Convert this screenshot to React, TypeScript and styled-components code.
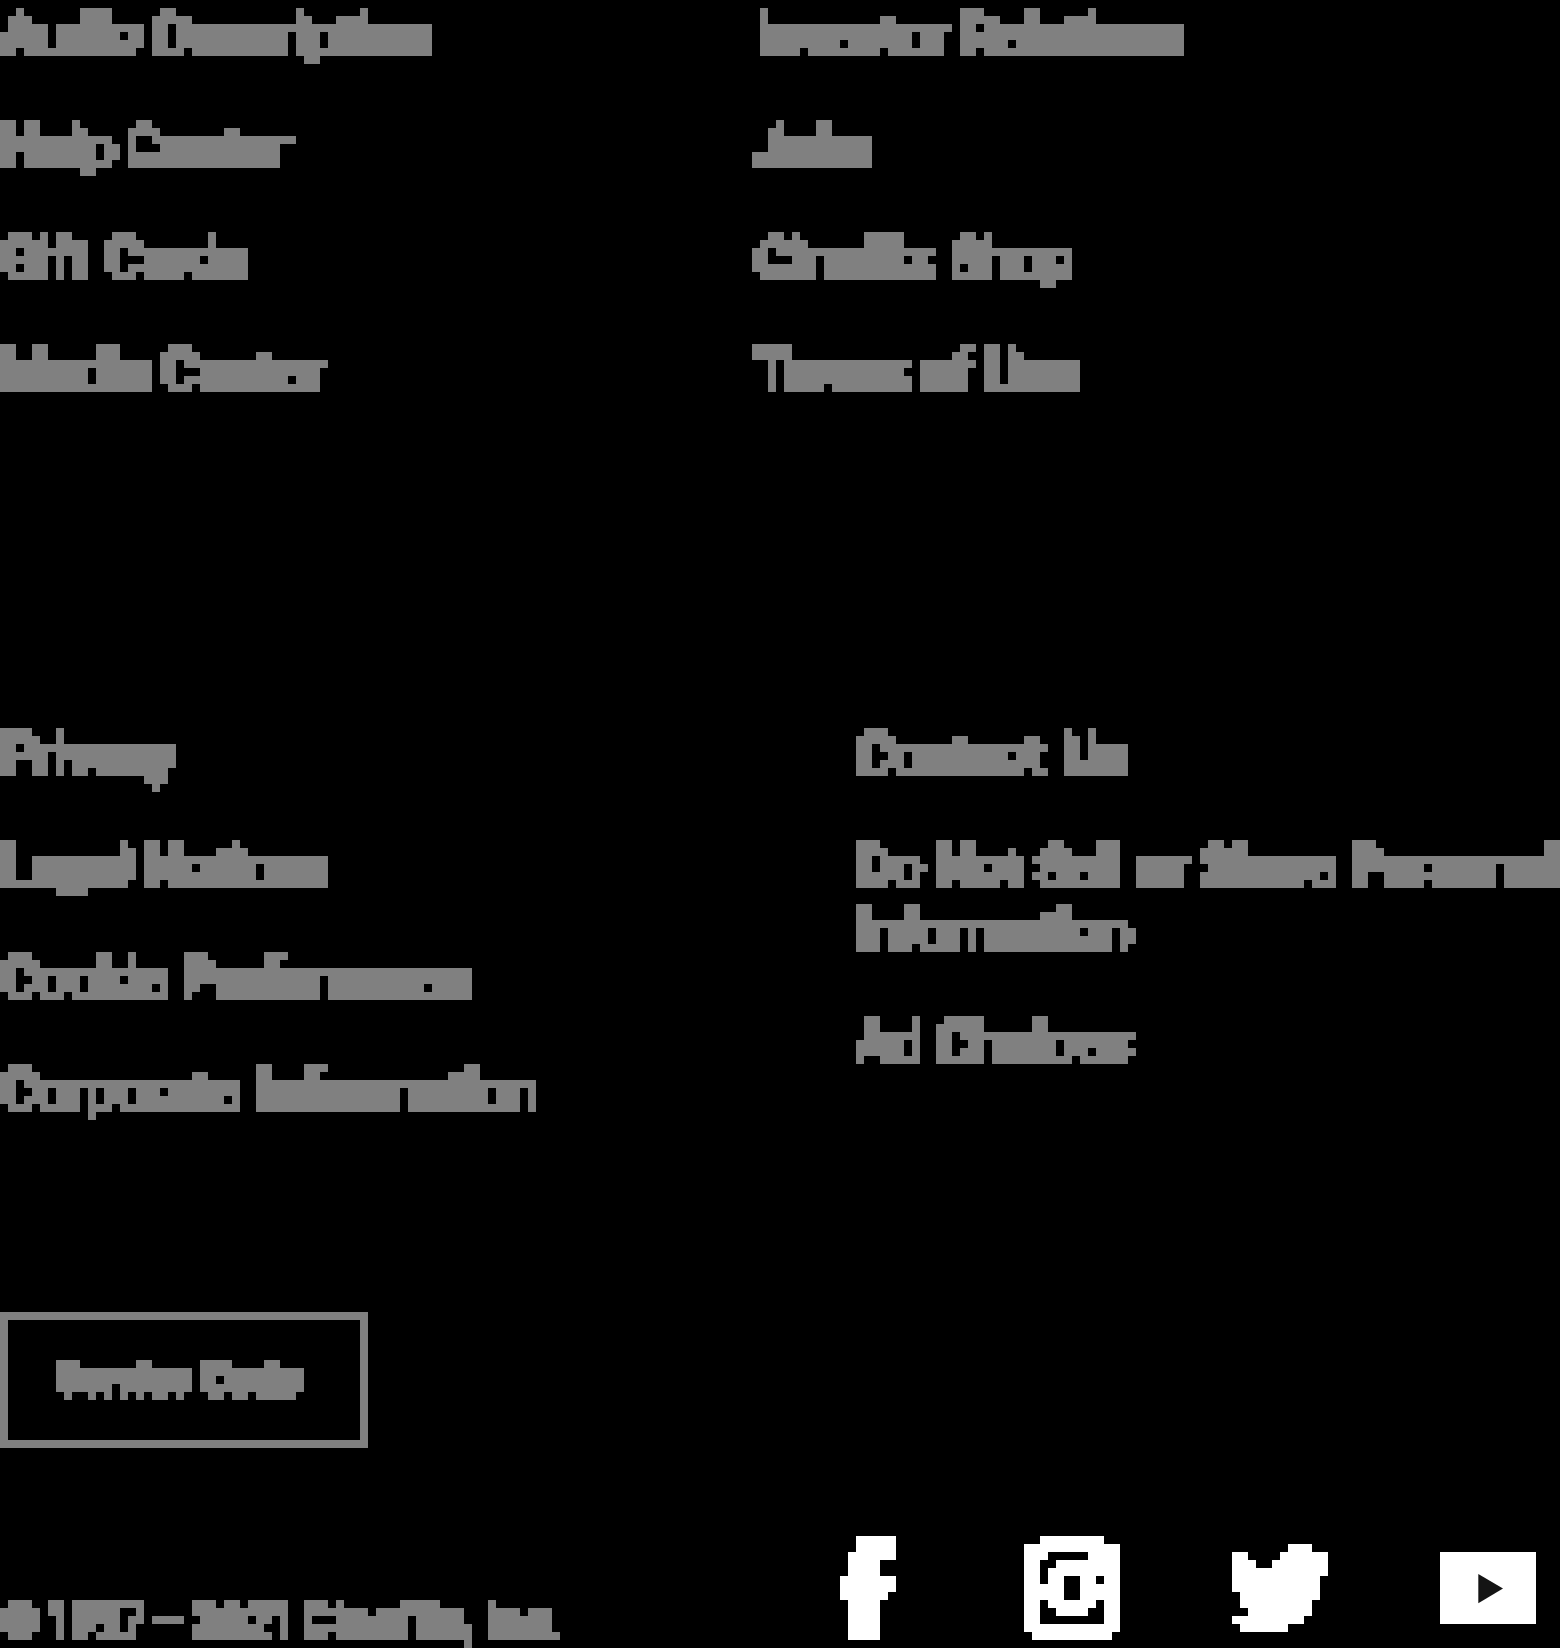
import React from "react";
import styled, { createGlobalStyle } from "styled-components";

const CELL = 8;
const KERNEL = Array(CELL * CELL).fill(1).join(" ");

const GlobalStyle = createGlobalStyle`
  body {
    margin: 0;
    background: #000;
  }
`;

const Page = styled.footer`
  display: flex;
  flex-direction: column;
  width: 1560px;
  height: 1648px;
  overflow: hidden;
  background: #000;
  color: #808080;
  font-family: Roboto, "Liberation Sans", Arial, sans-serif;
  text-rendering: geometricPrecision;
`;

const FilterDefs = styled.svg`
  position: absolute;
  width: 0;
  height: 0;
`;

const LinkGrid = styled.nav<{ $second: number; $height: number }>`
  display: grid;
  grid-template-columns: ${(p) => p.$second}px 1fr;
  height: ${(p) => p.$height}px;
  filter: url(#cells);
`;

const LinkList = styled.ul`
  display: flex;
  flex-direction: column;
  gap: 48px;
  margin: 0;
  padding: 4px 0 0;
  list-style: none;
`;

const LinkItem = styled.li<{ $track?: number; $space?: number }>`
  font-size: 54px;
  line-height: 64px;
  letter-spacing: ${(p) => p.$track ?? 0}px;
  word-spacing: ${(p) => p.$space ?? 0}px;
  text-shadow: 2.5px 0 #808080;
  white-space: nowrap;
`;

const ServiceRow = styled.div`
  display: flex;
  height: 136px;
  filter: url(#cells);
`;

const ServiceButton = styled.button`
  box-sizing: border-box;
  width: 368px;
  height: 136px;
  padding: 0 0 2px 46px;
  border: 8px solid #808080;
  border-radius: 0;
  background: transparent;
  color: inherit;
  font-family: inherit;
  font-size: 42px;
  line-height: 48px;
  text-align: left;
  text-shadow: 2px 0 #808080;
  white-space: nowrap;
`;

const BottomBar = styled.div`
  display: flex;
  margin-top: 80px;
  height: 120px;
`;

const Copyright = styled.div`
  width: 840px;
  height: 120px;
  box-sizing: border-box;
  padding-top: 67px;
  font-size: 45px;
  line-height: 52px;
  letter-spacing: 1.3px;
  text-shadow: 2px 0 #808080;
  white-space: nowrap;
  filter: url(#cells);
`;

const Years = styled.span`
  letter-spacing: -0.5px;
  word-spacing: -0.5px;
`;

const Social = styled.div`
  display: flex;
  align-items: center;
  gap: 112px;
  height: 104px;
  margin-top: 8px;
`;

const Glyph = styled.svg<{ $after?: number }>`
  display: block;
  flex: none;
  margin-right: ${(p) => p.$after ?? 0}px;
  fill: #fff;
`;

type Entry = { label: React.ReactNode; track?: number; space?: number };

const aboutLeft: Entry[] = [
  { label: "Audio Description", track: 0.2 },
  { label: "Help Center", track: 0.9, space: -4 },
  { label: "Gift Cards", space: 4 },
  { label: "Media Center", track: 0.4, space: -3 },
];
const aboutRight: Entry[] = [
  { label: "Investor Relations", track: -0.1 },
  { label: "Jobs", track: -0.8 },
  { label: "Cineflix Shop", track: -0.2, space: 4 },
  { label: "Terms of Use" },
];
const legalLeft: Entry[] = [
  { label: "Privacy" },
  { label: "Legal Notices", track: -0.1 },
  { label: "Cookie Preferences", track: -0.1, space: 2 },
  { label: "Corporate Information", space: 5 },
];
const legalRight: Entry[] = [
  { label: "Contact Us", space: 5 },
  {
    label: (
      <>
        Do Not Sell or Share Personal
        <br />
        Information
      </>
    ),
    track: -0.6,
    space: 2.5,
  },
  { label: "Ad Choices", track: 0.3 },
];

const Links = ({ items }: { items: Entry[] }) => (
  <LinkList>
    {items.map((item, i) => (
      <LinkItem key={i} $track={item.track} $space={item.space}>
        {item.label}
      </LinkItem>
    ))}
  </LinkList>
);

/* Snaps everything it is applied to onto an 8px grid of solid cells. */
const CellFilter = () => (
  <FilterDefs aria-hidden="true">
    <filter
      id="cells"
      filterUnits="userSpaceOnUse"
      x="0"
      y="0"
      width="1560"
      height="1648"
      colorInterpolationFilters="sRGB"
    >
      <feFlood x="4" y="4" width="1" height="1" floodColor="#fff" result="dot" />
      <feComposite in="dot" in2="dot" operator="over" x="0" y="0" width="8" height="8" result="cell" />
      <feTile in="cell" result="grid" />
      <feConvolveMatrix
        in="SourceGraphic"
        order="8"
        kernelMatrix={KERNEL}
        divisor="64"
        targetX={4}
        targetY={4}
        edgeMode="none"
        preserveAlpha="false"
      />
      <feComponentTransfer result="covered">
        <feFuncA type="linear" slope="2000" intercept="-90" />
      </feComponentTransfer>
      <feComposite in="grid" in2="covered" operator="in" />
      <feConvolveMatrix
        order="8"
        kernelMatrix={KERNEL}
        divisor="1"
        targetX={3}
        targetY={3}
        edgeMode="none"
        preserveAlpha="false"
        result="blocks"
      />
      <feFlood floodColor="#808080" />
      <feComposite in2="blocks" operator="in" />
    </filter>
  </FilterDefs>
);

export default function App() {
  return (
    <>
      <GlobalStyle />
      <CellFilter />
      <Page>
        <LinkGrid $second={755} $height={720}>
          <Links items={aboutLeft} />
          <Links items={aboutRight} />
        </LinkGrid>
        <LinkGrid $second={855} $height={592}>
          <Links items={legalLeft} />
          <Links items={legalRight} />
        </LinkGrid>
        <ServiceRow>
          <ServiceButton>Service Code</ServiceButton>
        </ServiceRow>
        <BottomBar>
          <Copyright>
            <Years>© 1997 – 2021 </Years>
            Cineflix, Inc.
          </Copyright>
          <Social>
            <Glyph width="56" height="104" viewBox="0 0 7 13" shapeRendering="crispEdges" $after={16}>
              <path d="M2 0H7V3H5V5H7V7H6V8H5V13H1V8H0V5H1V2H2Z" />
            </Glyph>
            <Glyph width="96" height="104" viewBox="0 0 12 13" shapeRendering="crispEdges">
              <path
                fillRule="evenodd"
                d="M2 0H10V1H12V12H11V13H1V12H0V1H2ZM3 2V3H2V6H3V4H4V3H8V2ZM5 5V8H7V5ZM9 5V6H10V5ZM2 8V11H10V8H9V9H8V10H4V9H3V8Z"
              />
            </Glyph>
            <Glyph width="96" height="88" viewBox="0 0 12 11" shapeRendering="crispEdges">
              <path d="M7 0H10V1H12V4H11V7H10V9H9V10H7V11H1V10H0V9H2V8H1V6H0V1H2V2H3V3H5V2H6V1H7Z" />
            </Glyph>
            <Glyph width="96" height="72" viewBox="0 0 96 72">
              <path d="M0 0H96V72H0Z" />
              <path fill="#141414" d="M38.3 22L63 36.6L38.3 51.2Z" />
            </Glyph>
          </Social>
        </BottomBar>
      </Page>
    </>
  );
}
